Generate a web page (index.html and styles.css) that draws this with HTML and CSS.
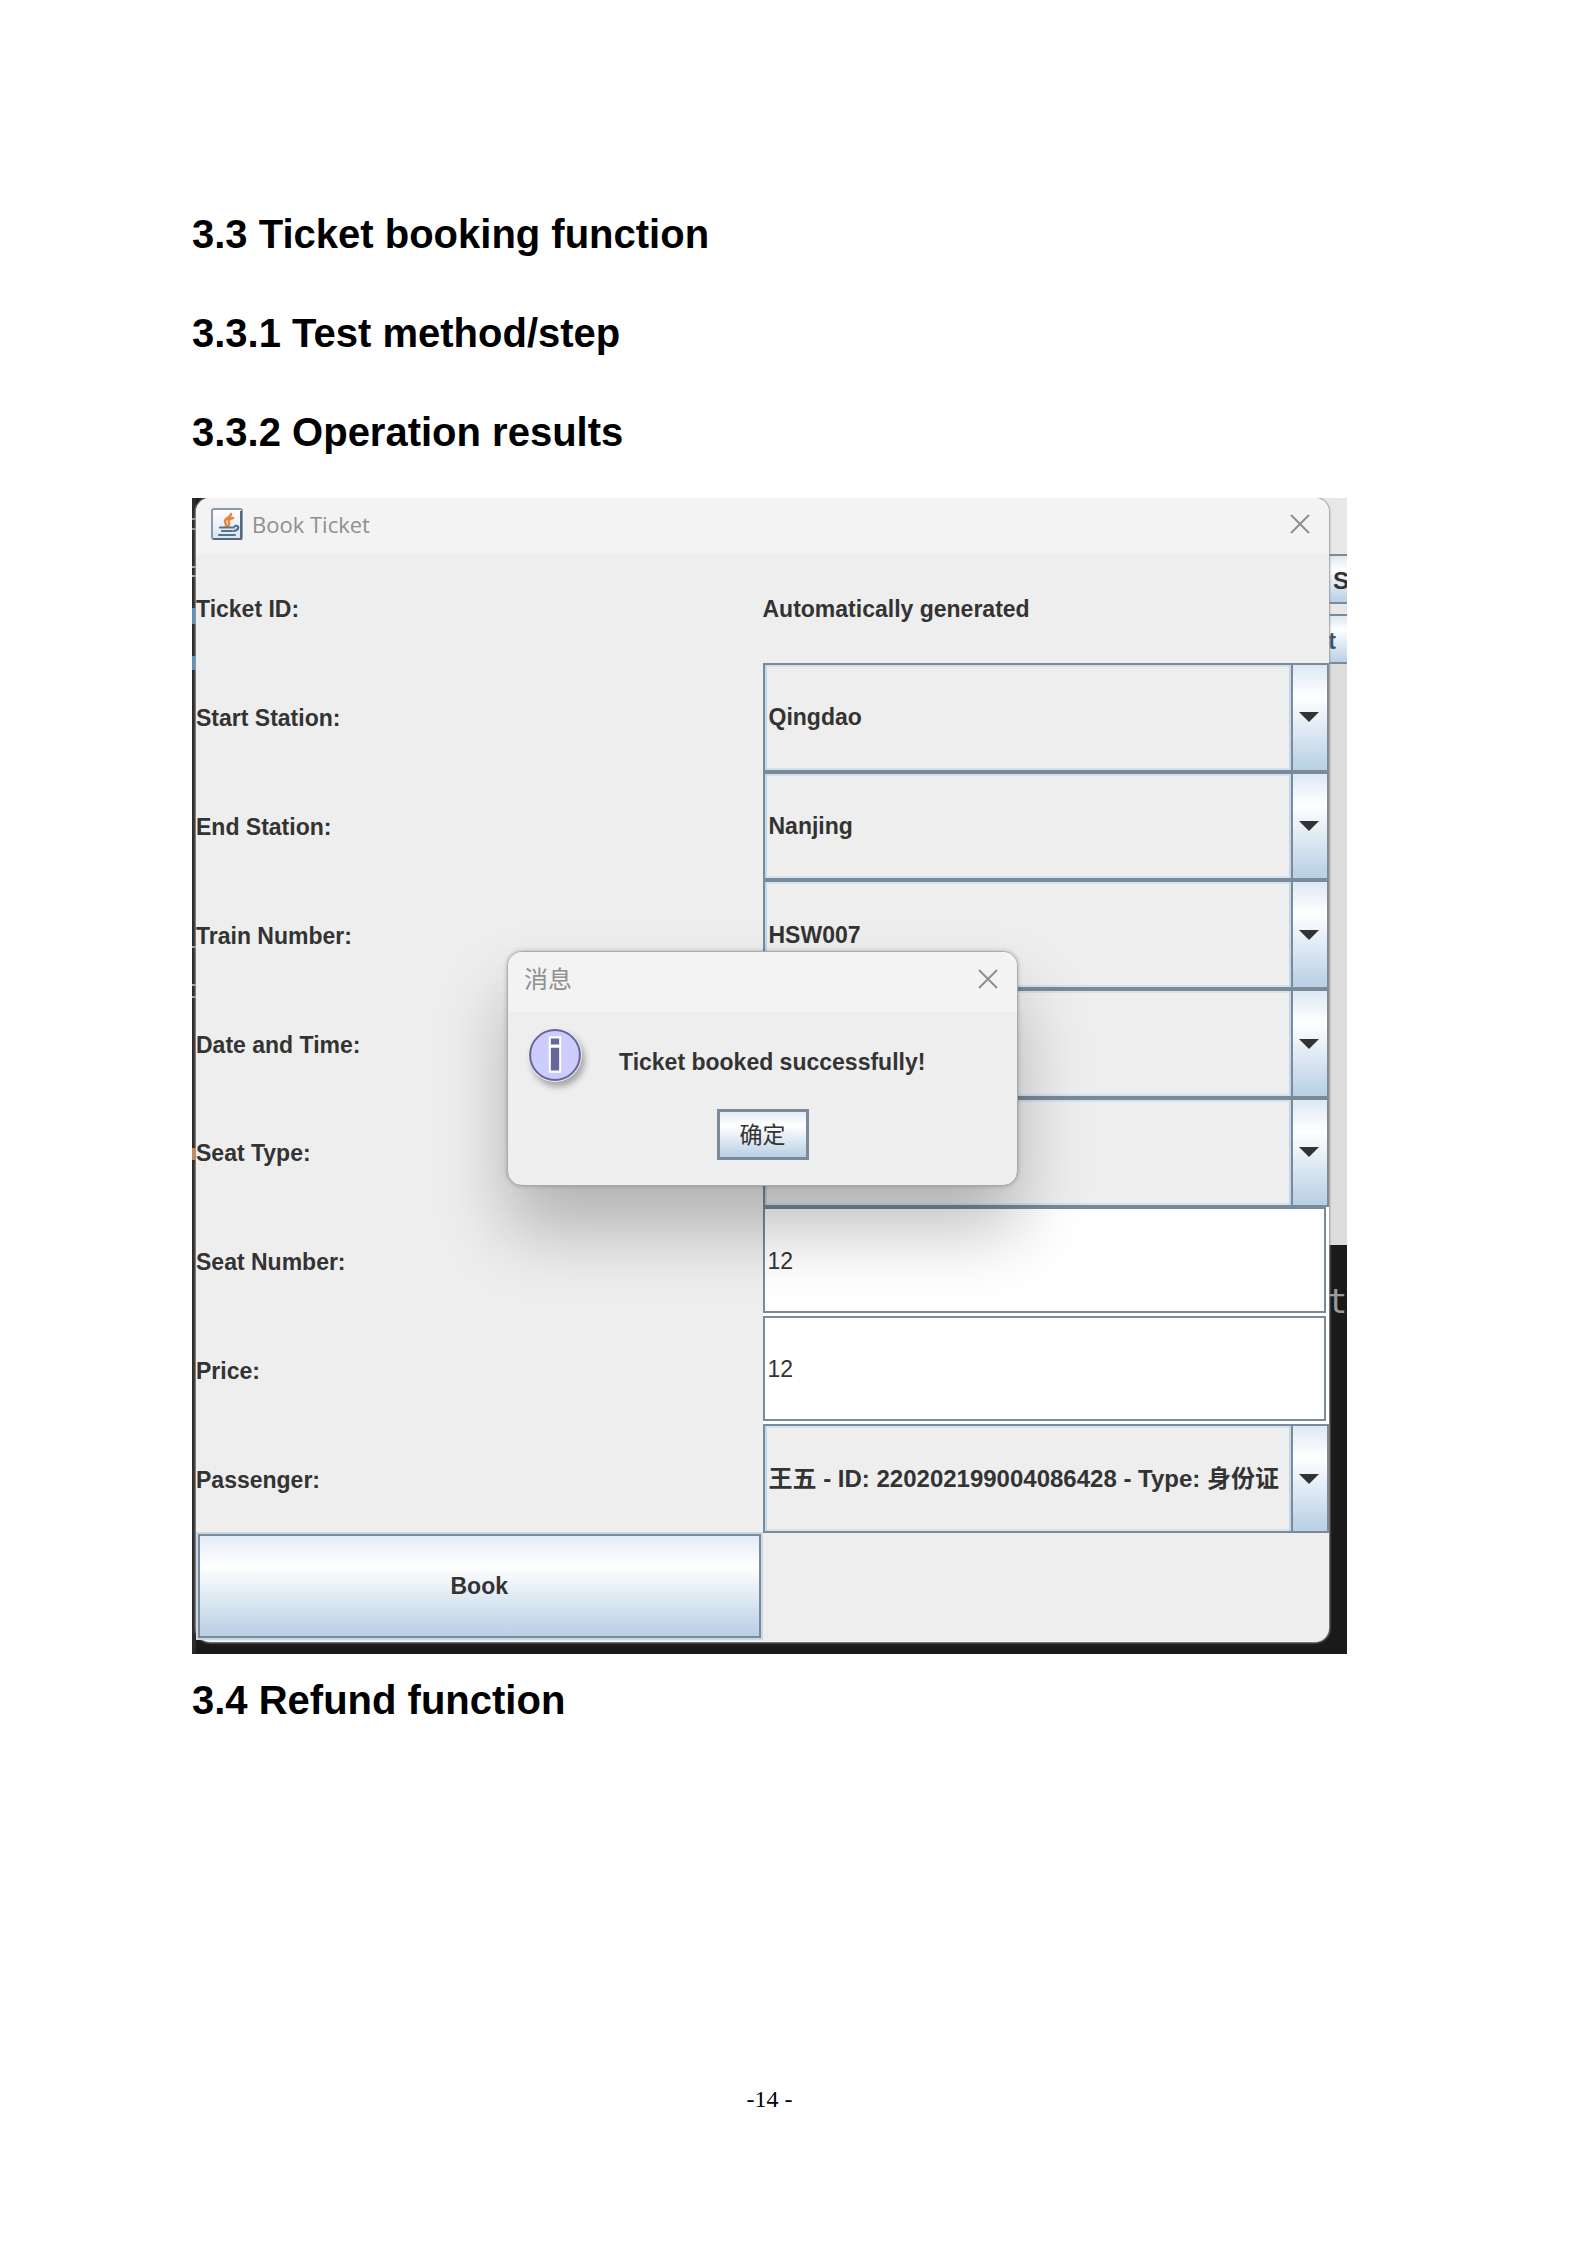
FILE: index.html
```html
<!DOCTYPE html>
<html lang="en">
<head>
<meta charset="utf-8">
<title>Test report - page 14</title>
<link rel="stylesheet" href="styles.css">
</head>
<body>
<main class="page">
  <section class="headings">
    <h2>3.3 Ticket booking function</h2>
    <h3>3.3.1 Test method/step</h3>
    <h3>3.3.2 Operation results</h3>
  </section>

  <figure class="shot">
    <div class="backdrop" aria-hidden="true">
      <div class="editor-edge"></div>
      <div class="parent-window">
        <div class="parent-title"></div>
        <div class="parent-button">S</div>
        <div class="parent-button parent-button-low">t</div>
        <div class="parent-body"></div>
        <div class="editor-text">t</div>
      </div>
    </div>

    <div class="window">
      <header class="titlebar">
        <svg class="java" viewBox="0 0 32 32" aria-hidden="true">
          <defs><linearGradient id="tile" x1="0" y1="0" x2="0" y2="1"><stop offset="0" stop-color="#fff"/><stop offset="1" stop-color="#dce4ec"/></linearGradient></defs>
          <rect x="1" y="1" width="30" height="30" rx="2" fill="url(#tile)" stroke="#8d9aa6" stroke-width="2"/>
          <path d="M2 31h28V3" fill="none" stroke="#56697b" stroke-width="2"/>
          <path d="M20 6c0 4-7 4-6 8 0 2 2 2 1 4M22 10c-5 1-5 3-4 5 1 1 0 2-1 3" fill="none" stroke="#e8833a" stroke-width="2.4" stroke-linecap="round"/>
          <path d="M9 19.500h14M11 23h10M8 27h16M24 18c5-1 4 4-1 5" fill="none" stroke="#4f7590" stroke-width="2.200" stroke-linecap="round"/>
        </svg>
        <h4 class="title">Book Ticket</h4>
        <button class="close" type="button" aria-label="Close"><svg viewBox="0 0 20 20"><path d="M1 1l18 18M19 1L1 19"/></svg></button>
      </header>

      <form class="form">
        <span class="label">Ticket ID:</span>
        <output class="value">Automatically generated</output>

        <label class="label" for="start">Start Station:</label>
        <div class="combo"><select id="start"><option>Qingdao</option></select><svg class="arrow" viewBox="0 0 20 10"><path d="M0 0h20L10 10z"/></svg></div>

        <label class="label" for="end">End Station:</label>
        <div class="combo"><select id="end"><option>Nanjing</option></select><svg class="arrow" viewBox="0 0 20 10"><path d="M0 0h20L10 10z"/></svg></div>

        <label class="label" for="train">Train Number:</label>
        <div class="combo"><select id="train"><option>HSW007</option></select><svg class="arrow" viewBox="0 0 20 10"><path d="M0 0h20L10 10z"/></svg></div>

        <label class="label" for="date">Date and Time:</label>
        <div class="combo"><select id="date"><option></option></select><svg class="arrow" viewBox="0 0 20 10"><path d="M0 0h20L10 10z"/></svg></div>

        <label class="label" for="seat-type">Seat Type:</label>
        <div class="combo"><select id="seat-type"><option></option></select><svg class="arrow" viewBox="0 0 20 10"><path d="M0 0h20L10 10z"/></svg></div>

        <label class="label" for="seat">Seat Number:</label>
        <div class="field"><input id="seat" type="text" value="12"></div>

        <label class="label" for="price">Price:</label>
        <div class="field"><input id="price" type="text" value="12"></div>

        <label class="label" for="passenger">Passenger:</label>
        <div class="combo"><select id="passenger" class="wide-text"><option>王五 - ID: 220202199004086428 - Type: 身份证</option></select><svg class="arrow" viewBox="0 0 20 10"><path d="M0 0h20L10 10z"/></svg></div>

        <button class="metal book" type="button">Book</button>
      </form>

      <div class="message" role="dialog" aria-labelledby="message-title">
        <header class="message-bar">
          <h4 class="title" id="message-title">消息</h4>
          <button class="close" type="button" aria-label="Close"><svg viewBox="0 0 20 20"><path d="M1 1l18 18M19 1L1 19"/></svg></button>
        </header>
        <div class="message-body">
          <svg class="info" viewBox="0 0 52 52" aria-hidden="true">
            <circle cx="26" cy="26" r="24" fill="#ccccff" stroke="#666699" stroke-width="2"/>
            <path d="M20 8h12v10H20zM20 17h12v26H20z" fill="#fff"/>
            <path d="M22 10h8v6h-8zM22 19h8v22h-8z" fill="#666699"/>
          </svg>
          <p>Ticket booked successfully!</p>
        </div>
        <button class="metal ok" type="button">确定</button>
      </div>
    </div>
  </figure>

  <h2 class="next">3.4 Refund function</h2>
  <footer class="page-number">-14 -</footer>
</main>
</body>
</html>
```
FILE: styles.css
```css
* { box-sizing: border-box; }

body {
  margin: 0;
  background: #fff;
  color: #000;
  font-family: "Liberation Sans", "Noto Sans CJK SC", sans-serif;
}

.page {
  display: flex;
  flex-direction: column;
  min-height: 100vh;
  padding: 211px 240px 132px 192px;
}

h2, h3, h4, p { margin: 0; }

h2, h3 {
  font-size: 40px;
  line-height: 46px;
  font-weight: 700;
}

.headings {
  display: flex;
  flex-direction: column;
  gap: 53px;
}

.next { margin-top: 23px; }

.page-number {
  margin-top: auto;
  text-align: center;
  font: 24px/28px "Liberation Serif", serif;
}

/* Screenshot figure */
.shot {
  position: relative;
  margin: 43px 0 0;
  padding: 0 18px 12px 4px;
  background: #1a1a1b;
  color: #333;
  overflow: hidden;
}

.backdrop {
  position: absolute;
  inset: 0;
  display: flex;
  justify-content: space-between;
}

.editor-edge {
  width: 4px;
  background:
    linear-gradient(#5b93b8, #5b93b8) 0 110px / 4px 16px no-repeat,
    linear-gradient(#5b93b8, #5b93b8) 0 158px / 4px 14px no-repeat,
    linear-gradient(#999, #999) 0 20px / 4px 2px no-repeat,
    linear-gradient(#999, #999) 0 30px / 4px 2px no-repeat,
    linear-gradient(#aaa, #aaa) 0 68px / 4px 2px no-repeat,
    linear-gradient(#aaa, #aaa) 0 77px / 4px 2px no-repeat,
    linear-gradient(#aaa, #aaa) 0 448px / 4px 2px no-repeat,
    linear-gradient(#aaa, #aaa) 0 486px / 4px 2px no-repeat,
    linear-gradient(#aaa, #aaa) 0 498px / 4px 2px no-repeat,
    linear-gradient(#c98a55, #c98a55) 0 650px / 4px 12px no-repeat,
    #2b2b2b;
}

.parent-window {
  display: flex;
  flex-direction: column;
  width: 32px;
}

.parent-title {
  height: 56px;
  background: #e8e8e8;
}

.parent-button {
  height: 50px;
  border: solid #7a8a99;
  border-width: 2px 0;
  padding: 2px 0 0 18px;
  background: linear-gradient(#dde8f3, #fff 30%, #b8cfe5);
  font-size: 24px;
  font-weight: 700;
  line-height: 46px;
}

.parent-button-low {
  margin-top: 10px;
  padding-left: 13px;
  box-shadow: 0 -10px #e8e8e8;
  color: #3d5468;
}

.parent-body {
  height: 581px;
  background: #dcdcdc;
}

.editor-text {
  padding: 34px 0 0 12px;
  color: #999;
  font: 34px/44px "DejaVu Sans Mono", monospace;
}

/* Booking window */
.window {
  position: relative;
  border-radius: 14px;
  background: #eee;
  box-shadow: 0 0 2px 1px #999;
}

.titlebar {
  display: flex;
  align-items: center;
  height: 56px;
  padding: 0 19px 5px 15px;
  border-radius: 14px 14px 0 0;
  background: #f3f3f3;
}

.java {
  width: 32px;
  height: 32px;
  margin-right: 9px;
}

.title {
  flex: 1;
  color: #8f8f8f;
  font: 22px/30px "Open Sans", "Noto Sans CJK SC", sans-serif;
}

.close {
  display: flex;
  padding: 0;
  border: 0;
  background: none;
}

.close svg {
  width: 20px;
  height: 20px;
  fill: none;
  stroke: #8f8f8f;
  stroke-width: 2;
}

.form {
  display: grid;
  grid-template-columns: 1fr 1fr;
  grid-template-rows: repeat(10, 1fr);
  aspect-ratio: 1133 / 1088;
  font-size: 23px;
  font-weight: 700;
}

.label, .value {
  display: flex;
  align-items: center;
  padding-top: 3px;
}

.combo {
  display: grid;
  grid-template-columns: 1fr 36px;
  border: 2px solid #7a8a99;
  background: #eee;
}

.combo select {
  grid-area: 1 / 1 / 2 / 3;
  min-width: 0;
  padding: 0 38px 0 2px;
  border: 2px solid #c3d8ea;
  border-width: 0 0 0 2px;
  border-radius: 0;
  appearance: none;
  background:
    linear-gradient(#dde8f3, #fff 30%, #b8cfe5) right / 34px 100% no-repeat,
    linear-gradient(#7a8a99, #7a8a99) right 34px top / 2px 100% no-repeat,
    linear-gradient(#c3d8ea, #c3d8ea) right 36px top / 2px 100% no-repeat,
    linear-gradient(#d3e2ef, #d3e2ef) top / 100% 2px no-repeat,
    linear-gradient(#d3e2ef, #d3e2ef) bottom / 100% 2px no-repeat;
  background-origin: border-box;
  background-clip: border-box;
  color: inherit;
  font: inherit;
}

.combo .wide-text { font-size: 24px; }

.arrow {
  grid-area: 1 / 2;
  align-self: center;
  justify-self: center;
  z-index: 1;
  width: 20px;
  height: 10px;
  fill: #333;
  pointer-events: none;
}

.field {
  display: flex;
  padding: 0 3px 3px 0;
  background: #fff;
}

.field input {
  flex: 1;
  min-width: 0;
  padding: 2px 4px 0 3px;
  border: 2px solid #7a8a99;
  border-radius: 0;
  background: #fff;
  color: inherit;
  font: 400 23px/28px "Liberation Sans", sans-serif;
}

.metal {
  border: 3px solid #7a8a99;
  border-radius: 0;
  background: linear-gradient(#e2ecf5, #fff 30%, #b8cfe5);
  color: #333;
  font: 700 23px/28px "Liberation Sans", "Noto Sans CJK SC", sans-serif;
}

.book {
  margin: 1px 2px 4px 2px;
  border-width: 2px;
  box-shadow: 0 0 0 2px #c8d8e6;
}

/* Message dialog */
.message {
  position: absolute;
  top: 453px;
  left: 311px;
  display: flex;
  flex-direction: column;
  width: 511px;
  padding-bottom: 25px;
  border: 1px solid #aaa;
  border-radius: 15px;
  background: #eee;
  box-shadow: 0 44px 70px rgba(0, 0, 0, .25), 0 0 4px rgba(0, 0, 0, .25);
}

.message-bar {
  display: flex;
  align-items: center;
  height: 60px;
  padding: 0 19px 6px 16px;
  border-radius: 14px 14px 0 0;
  background: #f3f3f3;
}

.message-bar .title { font-size: 24px; }

.message-body {
  display: flex;
  align-items: center;
  gap: 37px;
  padding: 16px 20px 0;
  font-size: 23px;
  font-weight: 700;
  line-height: 28px;
}

.message-body p { padding-top: 14px; }

.info {
  width: 54px;
  height: 54px;
  border-radius: 50%;
  box-shadow: 3px 5px 6px rgba(0, 0, 0, .3);
}

.ok {
  align-self: center;
  height: 51px;
  margin-top: 27px;
  padding: 0 20px;
  font-weight: 400;
}
```
